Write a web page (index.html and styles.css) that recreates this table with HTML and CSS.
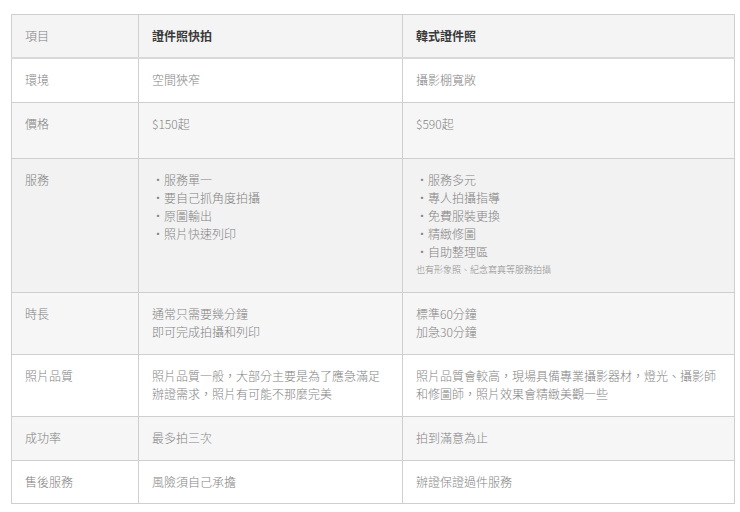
FILE: index.html
```html
<!DOCTYPE html>
<html lang="zh-Hant">
<head>
<meta charset="utf-8">
<title>證件照比較</title>
<link rel="stylesheet" href="styles.css">
</head>
<body>
<table class="compare">
  <colgroup>
    <col class="c1"><col class="c2"><col class="c3">
  </colgroup>
  <thead>
    <tr class="r-head">
      <th class="label">項目</th>
      <th class="title">證件照快拍</th>
      <th class="title">韓式證件照</th>
    </tr>
  </thead>
  <tbody>
    <tr class="r-white r45">
      <td class="label">環境</td>
      <td>空間狹窄</td>
      <td>攝影棚寬敞</td>
    </tr>
    <tr class="r-gray r56">
      <td class="label">價格</td>
      <td>$150起</td>
      <td>$590起</td>
    </tr>
    <tr class="r-dark r134">
      <td class="label">服務</td>
      <td>
        <div>・服務單一</div>
        <div>・要自己抓角度拍攝</div>
        <div>・原圖輸出</div>
        <div>・照片快速列印</div>
      </td>
      <td>
        <div>・服務多元</div>
        <div>・專人拍攝指導</div>
        <div>・免費服裝更換</div>
        <div>・精緻修圖</div>
        <div>・自助整理區</div>
        <div class="note">也有形象照、紀念寫真等服務拍攝</div>
      </td>
    </tr>
    <tr class="r-gray r62">
      <td class="label">時長</td>
      <td>
        <div>通常只需要幾分鐘</div>
        <div>即可完成拍攝和列印</div>
      </td>
      <td>
        <div>標準60分鐘</div>
        <div>加急30分鐘</div>
      </td>
    </tr>
    <tr class="r-white r62">
      <td class="label">照片品質</td>
      <td class="para">照片品質一般，大部分主要是為了應急滿足辦證需求，照片有可能不那麼完美</td>
      <td class="para">照片品質會較高，現場具備專業攝影器材，燈光、攝影師和修圖師，照片效果會精緻美觀一些</td>
    </tr>
    <tr class="r-gray r44">
      <td class="label">成功率</td>
      <td class="indent">最多拍三次</td>
      <td class="indent">拍到滿意為止</td>
    </tr>
    <tr class="r-white r43">
      <td class="label">售後服務</td>
      <td class="indent">風險須自己承擔</td>
      <td class="indent">辦證保證過件服務</td>
    </tr>
  </tbody>
</table>
</body>
</html>
```

FILE: styles.css
```css
html, body {
  margin: 0;
  padding: 0;
  background: #ffffff;
}

body {
  font-family: "Noto Sans CJK TC", "Noto Sans", sans-serif;
  font-size: 12px;
  line-height: 18px;
  color: #838383;
}

.compare {
  margin: 14px 0 0 11px;
  width: 723px;
  table-layout: fixed;
  border-collapse: collapse;
  border: 1px solid #cfcfcf;
}

.c1 { width: 127px; }
.c2 { width: 264px; }
.c3 { width: 332px; }

.compare th,
.compare td {
  border: 1px solid #cfcfcf;
  padding: 12px 12px 0 13px;
  vertical-align: top;
  text-align: left;
  font-weight: 300;
}

.compare thead tr {
  border-bottom: 2px solid #d9d9d9;
}

.r-head { height: 43px; background: #f4f4f4; }
.r-white { background: #ffffff; }
.r-gray { background: #f6f6f6; }
.r-dark { background: #f2f2f2; }

.r43 { height: 43px; }
.r44 { height: 44px; }
.r45 { height: 45px; }
.r56 { height: 56px; }
.r62 { height: 62px; }
.r134 { height: 134px; }

.label { color: #808080; }

.compare th.title {
  font-weight: 700;
  color: #3a3a3a;
}

.para { line-height: 17.5px; }

.indent { padding-left: 17px; }

.note {
  font-size: 9px;
  line-height: 17px;
  color: #8a8a8a;
}
```
